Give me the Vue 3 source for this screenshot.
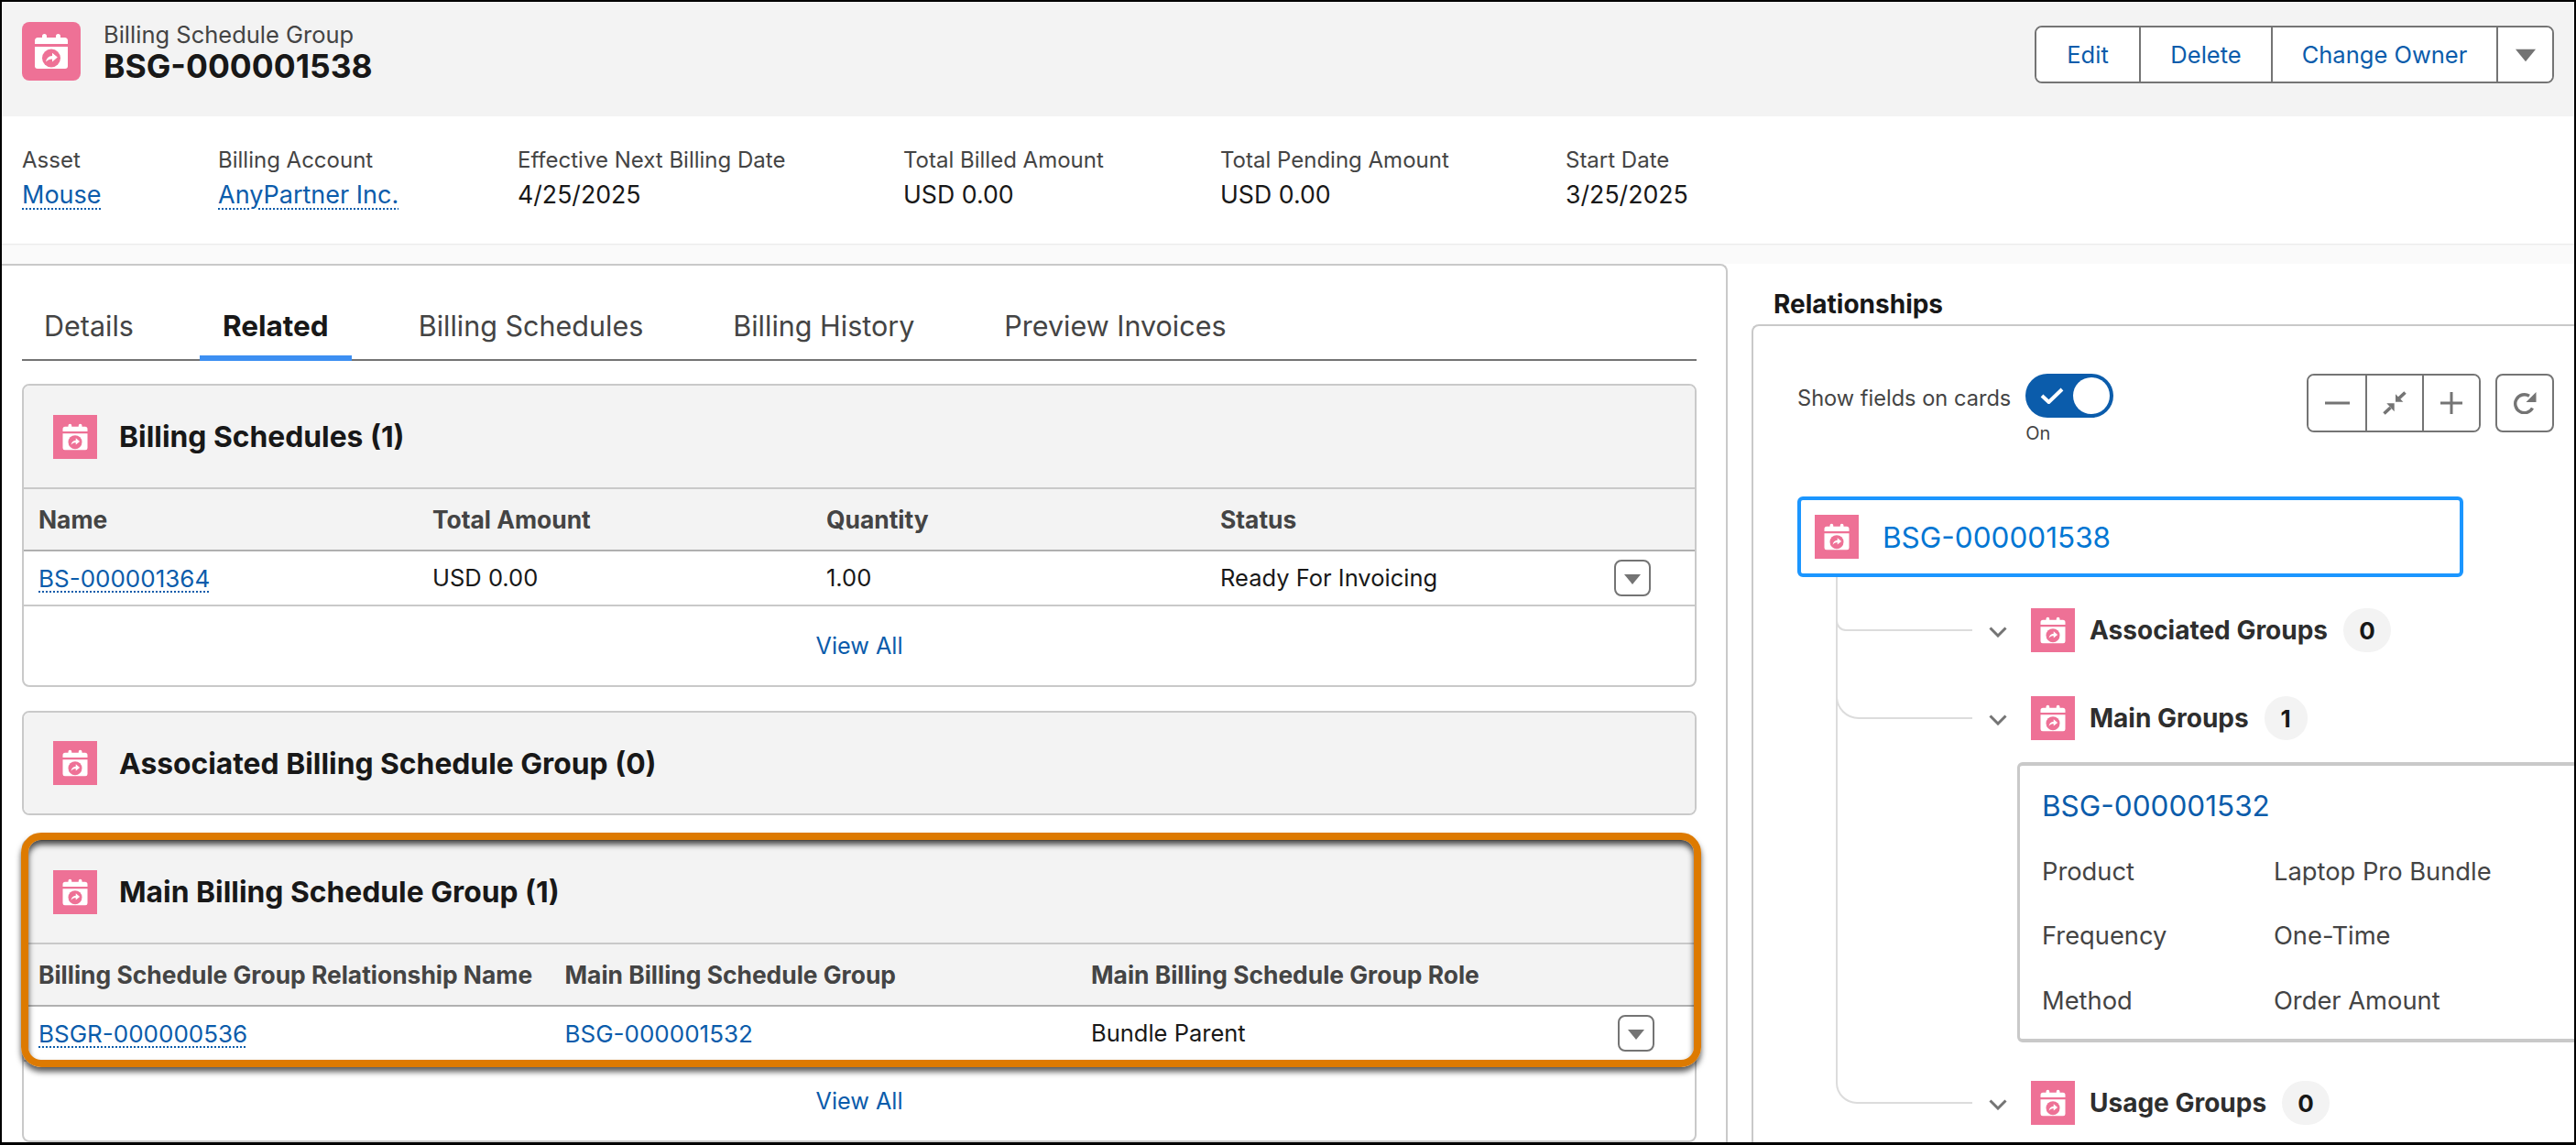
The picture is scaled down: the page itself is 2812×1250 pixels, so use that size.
<script setup>
const highlights = [
  { label: "Asset", value: "Mouse", link: true },
  { label: "Billing Account", value: "AnyPartner Inc.", link: true },
  { label: "Effective Next Billing Date", value: "4/25/2025" },
  { label: "Total Billed Amount", value: "USD 0.00" },
  { label: "Total Pending Amount", value: "USD 0.00" },
  { label: "Start Date", value: "3/25/2025" },
];

const tabs = ["Details", "Related", "Billing Schedules", "Billing History", "Preview Invoices"];

const fields = [
  { label: "Product", value: "Laptop Pro Bundle" },
  { label: "Frequency", value: "One-Time" },
  { label: "Method", value: "Order Amount" },
];
</script>

<template>
  <div class="page">
    <svg class="defs" width="0" height="0">
      <symbol id="bsg" viewBox="0 0 64 64">
        <path fill="#fff" d="M14 20.500a3.500 3.500 0 0 1 3.500-3.500H22v-1.500a2.500 2.500 0 0 1 5 0V17h10v-1.500a2.500 2.500 0 0 1 5 0V17h4.500a3.500 3.500 0 0 1 3.500 3.500V24H14z" />
        <path fill="#fff" d="M14 27h36v21a3 3 0 0 1-3 3H17a3 3 0 0 1-3-3z" />
        <circle cx="32" cy="39.500" r="10" fill="#ee7196" />
        <path fill="#fff" d="M33 33.800l5.800 4.800-5.800 4.800v-3c-3 0-5 .8-6.800 3.200.3-3.800 2.800-6.500 6.800-6.700z" />
      </symbol>
      <symbol id="caret" viewBox="0 0 18 11">
        <path fill="#747474" d="M0 0h18l-9 11z" />
      </symbol>
    </svg>

    <header class="page-header">
      <div class="title-block">
        <svg class="icon-large"><use href="#bsg" /></svg>
        <div>
          <div class="object-name">Billing Schedule Group</div>
          <h1>BSG-000001538</h1>
        </div>
      </div>
      <div class="actions">
        <button type="button" class="edit">Edit</button>
        <button type="button" class="delete">Delete</button>
        <button type="button" class="owner">Change Owner</button>
        <button type="button" class="more"><svg class="caret-big"><use href="#caret" /></svg></button>
      </div>
    </header>

    <section class="highlights">
      <div v-for="item in highlights" :key="item.label" class="highlight">
        <div class="highlight-label">{{ item.label }}</div>
        <div class="highlight-value">
          <a v-if="item.link" class="link dotted">{{ item.value }}</a>
          <template v-else>{{ item.value }}</template>
        </div>
      </div>
    </section>

    <div class="band"></div>

    <div class="content">
      <main class="left-panel">
        <nav class="tabs">
          <div
            v-for="tab in tabs"
            :key="tab"
            class="tab"
            :class="{ active: tab === 'Related' }"
          >
            {{ tab }}
          </div>
        </nav>

        <section class="card first">
          <div class="card-header">
            <svg class="icon"><use href="#bsg" /></svg>
            <h2>Billing Schedules (1)</h2>
          </div>
          <div class="table-head cols-four">
            <span>Name</span>
            <span>Total Amount</span>
            <span>Quantity</span>
            <span>Status</span>
          </div>
          <div class="table-row cols-four">
            <a class="link dotted">BS-000001364</a>
            <span>USD 0.00</span>
            <span>1.00</span>
            <span>Ready For Invoicing</span>
            <button type="button" class="row-menu"><svg class="caret-small"><use href="#caret" /></svg></button>
          </div>
          <div class="view-all"><a class="link">View All</a></div>
        </section>

        <section class="card second">
          <div class="card-header only">
            <svg class="icon"><use href="#bsg" /></svg>
            <h2>Associated Billing Schedule Group (0)</h2>
          </div>
        </section>

        <section class="card third">
          <div class="callout">
            <div class="card-header">
              <svg class="icon"><use href="#bsg" /></svg>
              <h2>Main Billing Schedule Group (1)</h2>
            </div>
            <div class="table-head cols-three">
              <span>Billing Schedule Group Relationship Name</span>
              <span>Main Billing Schedule Group</span>
              <span>Main Billing Schedule Group Role</span>
            </div>
            <div class="table-row cols-three">
              <a class="link dotted">BSGR-000000536</a>
              <a class="link">BSG-000001532</a>
              <span>Bundle Parent</span>
              <button type="button" class="row-menu"><svg class="caret-small"><use href="#caret" /></svg></button>
            </div>
          </div>
          <div class="view-all"><a class="link">View All</a></div>
        </section>
      </main>

      <aside class="right-panel">
        <h3 class="rel-title">Relationships</h3>
        <div class="rel-card">
          <div class="toolbar">
            <div class="show-fields">
              <span class="show-label">Show fields on cards</span>
              <div>
                <div class="toggle">
                  <svg class="check" viewBox="0 0 26 18"><path d="M2 9l7.500 7L24 2" /></svg>
                  <span class="knob"></span>
                </div>
                <div class="toggle-state">On</div>
              </div>
            </div>
            <div class="zoom-tools">
              <div class="tool-group">
                <button type="button" class="tool">
                  <svg width="27" height="4"><path d="M0 2h27" stroke="#747474" stroke-width="3" /></svg>
                </button>
                <button type="button" class="tool">
                  <svg width="26" height="26" viewBox="0 0 26 26" fill="#747474">
                    <path d="M14 3.300v8.400h8.400z" />
                    <path d="M12.700 13.300H4.300l8.400 9z" />
                    <path d="M17.500 8L24.500 1.500M8.500 18L1.500 24.500" stroke="#747474" stroke-width="3.600" />
                  </svg>
                </button>
                <button type="button" class="tool">
                  <svg width="24" height="24"><path d="M0 12h24M12 0v24" stroke="#747474" stroke-width="3" /></svg>
                </button>
              </div>
              <button type="button" class="tool single">
                <svg width="25" height="24" viewBox="0 0 25 24" fill="none">
                  <path d="M20.500 17.500A10 10 0 1 1 17 4.200" stroke="#747474" stroke-width="3.400" />
                  <path d="M24.500 0v11h-11z" fill="#747474" />
                </svg>
              </button>
            </div>
          </div>

          <div class="tree">
            <svg class="connectors" width="200" height="680" fill="none" stroke="#dcdcdc" stroke-width="2">
              <path d="M43 136a10 10 0 0 0 10 10H191" />
              <path d="M43 218a24 24 0 0 0 24 24H191" />
              <path d="M43 88V640a22 22 0 0 0 22 22H191" />
            </svg>

            <div class="root-node">
              <svg class="icon"><use href="#bsg" /></svg>
              <span>BSG-000001538</span>
            </div>

            <div class="group-row associated">
              <svg class="chevron" viewBox="0 0 20 12"><path d="M1.500 1.500L10 10l8.500-8.500" /></svg>
              <svg class="icon"><use href="#bsg" /></svg>
              <strong>Associated Groups</strong>
              <span class="count">0</span>
            </div>

            <div class="group-row main">
              <svg class="chevron" viewBox="0 0 20 12"><path d="M1.500 1.500L10 10l8.500-8.500" /></svg>
              <svg class="icon"><use href="#bsg" /></svg>
              <strong>Main Groups</strong>
              <span class="count narrow">1</span>
            </div>

            <div class="record-card">
              <a class="link record-name">BSG-000001532</a>
              <div v-for="field in fields" :key="field.label" class="record-field">
                <span>{{ field.label }}</span>
                <span>{{ field.value }}</span>
              </div>
            </div>

            <div class="group-row usage">
              <svg class="chevron" viewBox="0 0 20 12"><path d="M1.500 1.500L10 10l8.500-8.500" /></svg>
              <svg class="icon"><use href="#bsg" /></svg>
              <strong>Usage Groups</strong>
              <span class="count">0</span>
            </div>
          </div>
        </div>
      </aside>
    </div>
  </div>
</template>

<style scoped>
.page {
  box-sizing: border-box;
  width: 2812px;
  height: 1250px;
  display: flex;
  flex-direction: column;
  overflow: hidden;
  background: #fff;
  border: 2px solid #000;
  border-bottom-width: 3px;
  font-family: Inter, "Liberation Sans", sans-serif;
  color: #181818;
}

.defs {
  position: absolute;
}

h1,
h2,
h3 {
  margin: 0;
}

button {
  font: inherit;
  background: #fff;
  padding: 0;
  cursor: pointer;
}

.link {
  color: #0b5cab;
}

.link.dotted {
  text-decoration: underline dotted 2px;
  text-underline-offset: 5px;
}

.page-header {
  flex: none;
  height: 125px;
  box-sizing: border-box;
  display: flex;
  justify-content: space-between;
  padding: 21px 22px 0;
  background: #f3f3f3;
}

.title-block {
  display: flex;
  gap: 25px;
}

.icon-large {
  width: 64px;
  height: 64px;
  margin-top: 1px;
  border-radius: 8px;
  background: #ee7196;
}

.object-name {
  font-size: 25.500px;
  line-height: 30px;
  color: #444;
}

h1 {
  font-size: 35.500px;
  font-weight: 700;
  line-height: 40px;
}

.actions {
  display: flex;
  height: 63px;
  margin-top: 5px;
  box-sizing: border-box;
  border: 2px solid #747474;
  border-radius: 8px;
  overflow: hidden;
  background: #fff;
}

.actions button {
  border: 0;
  border-left: 2px solid #747474;
  color: #0b5cab;
  font-size: 25.500px;
}

.actions .edit {
  width: 112px;
  border-left: 0;
}

.actions .delete {
  width: 144px;
}

.actions .owner {
  width: 246px;
}

.actions .more {
  width: 61px;
}

.caret-big {
  display: block;
  width: 22px;
  height: 17px;
  margin: 2px auto 0;
}

.highlights {
  flex: none;
  height: 139px;
  box-sizing: border-box;
  display: grid;
  grid-template-columns: 214px 327px 421px 346px 377px auto;
  padding: 33px 0 0 22px;
}

.highlight-label {
  font-size: 24px;
  line-height: 30px;
  color: #444;
}

.highlight-value {
  margin-top: 4px;
  font-size: 26.700px;
  line-height: 36px;
}

.highlight-value .link {
  font-size: 27px;
}

.band {
  flex: none;
  height: 22px;
  background: #fafafa;
  box-shadow: inset 0 2px 2px -1px rgba(0, 0, 0, 0.08);
}

.content {
  flex: 1;
  min-height: 0;
  display: flex;
}

.left-panel {
  box-sizing: border-box;
  width: 1884px;
  flex: none;
  padding: 0 32px 0 22px;
  border-top: 2px solid #c9c9c9;
  border-right: 2px solid #c9c9c9;
  border-top-right-radius: 8px;
}

.tabs {
  display: flex;
  align-items: flex-end;
  gap: 48px;
  height: 102px;
  border-bottom: 2px solid #747474;
}

.tab {
  display: flex;
  align-items: center;
  height: 78px;
  margin-bottom: -2px;
  padding: 0 25px;
  font-size: 30.500px;
  color: #444;
}

.tab:first-child {
  padding-left: 24px;
  padding-right: 24px;
}

.tab.active {
  font-size: 31.500px;
  font-weight: 700;
  color: #181818;
  box-shadow: inset 0 -6px 0 #3d8ff2;
}

.card {
  border: 2px solid #c9c9c9;
  border-radius: 8px;
  overflow: visible;
}

.first {
  margin-top: 25px;
}

.second,
.third {
  margin-top: 26px;
}

.card-header {
  display: flex;
  align-items: center;
  gap: 24px;
  height: 111px;
  box-sizing: border-box;
  padding-left: 32px;
  background: #f3f3f3;
  border-radius: 6px 6px 0 0;
}

.card-header.only {
  height: 110px;
  border-radius: 6px;
}

.icon {
  flex: none;
  width: 48px;
  height: 48px;
  background: #ee7196;
}

h2 {
  font-size: 31.800px;
  font-weight: 700;
}

.table-head,
.table-row {
  display: grid;
  align-items: center;
  padding-left: 16px;
}

.cols-four {
  grid-template-columns: repeat(4, 430px) 1fr;
}

.cols-three {
  grid-template-columns: repeat(3, 574.500px) 1fr;
}

.table-head {
  height: 70px;
  box-sizing: border-box;
  border-top: 2px solid #c9c9c9;
  border-bottom: 2px solid #b0b0b0;
  background: #f3f3f3;
  font-size: 26.400px;
  font-weight: 700;
  color: #444;
}

.table-row {
  height: 60px;
  box-sizing: border-box;
  border-bottom: 2px solid #c9c9c9;
  padding-right: 48px;
  padding-bottom: 2px;
  font-size: 25.500px;
}

.table-row .link {
  font-size: 26px;
  line-height: 30px;
  padding-top: 3px;
}

.third .table-row {
  padding-right: 46px;
}

.row-menu {
  justify-self: end;
  width: 40px;
  height: 40px;
  margin-top: 2px;
  box-sizing: border-box;
  border: 2px solid #747474;
  border-radius: 8px;
}

.caret-small {
  display: block;
  width: 18px;
  height: 11px;
  margin: 2px auto 0;
}

.view-all {
  height: 86px;
  display: flex;
  align-items: center;
  justify-content: center;
  font-size: 25.200px;
}

.callout {
  position: relative;
}

/* annotation drawn over the screenshot */
.callout::after {
  content: "";
  position: absolute;
  inset: -9px -7px -6px -3px;
  border: 8px solid #dd7a01;
  border-radius: 22px;
  box-shadow: 0 5px 6px rgba(0, 0, 0, 0.65), inset 0 5px 6px rgba(0, 0, 0, 0.7);
  pointer-events: none;
}

.right-panel {
  flex: 1;
  min-width: 0;
  padding-left: 26px;
}

.rel-title {
  height: 66px;
  box-sizing: border-box;
  padding: 28px 0 0 24px;
  font-size: 28px;
  line-height: 32px;
  font-weight: 700;
}

.rel-card {
  height: 900px;
  box-sizing: border-box;
  width: 960px;
  border-top: 2px solid #c9c9c9;
  border-left: 2px solid #c9c9c9;
  border-top-left-radius: 8px;
}

.toolbar {
  display: flex;
  justify-content: space-between;
  width: 896px;
  box-sizing: border-box;
  padding: 52px 22px 0 48px;
}

.show-fields {
  display: flex;
  gap: 16px;
}

.show-label {
  margin-top: 12px;
  font-size: 23.600px;
  line-height: 30px;
  color: #444;
}

.toggle {
  display: flex;
  align-items: center;
  justify-content: space-between;
  box-sizing: border-box;
  width: 96px;
  height: 48px;
  padding: 0 4px 0 16px;
  border-radius: 24px;
  background: #0b5cab;
}

.check {
  width: 26px;
  height: 18px;
  fill: none;
  stroke: #fff;
  stroke-width: 4;
}

.knob {
  width: 40px;
  height: 40px;
  border-radius: 50%;
  background: #fff;
}

.toggle-state {
  margin-top: 5px;
  font-size: 20px;
  line-height: 24px;
  color: #444;
}

.zoom-tools {
  display: flex;
  gap: 16px;
}

.tool-group {
  display: flex;
  box-sizing: border-box;
  height: 64px;
  border: 2px solid #747474;
  border-radius: 8px;
  overflow: hidden;
}

.tool {
  display: flex;
  align-items: center;
  justify-content: center;
  width: 62px;
  border: 0;
  border-left: 2px solid #747474;
}

.tool:first-child {
  border-left: 0;
}

.tool.single {
  width: 64px;
  height: 64px;
  box-sizing: border-box;
  border: 2px solid #747474;
  border-radius: 8px;
}

.tree {
  position: relative;
  margin: 57px 0 0 48px;
  width: 848px;
}

.connectors {
  position: absolute;
  top: 0;
  left: 0;
}

.root-node {
  display: flex;
  align-items: center;
  gap: 26px;
  width: 727px;
  height: 88px;
  box-sizing: border-box;
  padding-left: 15px;
  border: 4px solid #1b96ff;
  border-radius: 6px;
  font-size: 31.500px;
  color: #0176d3;
}

.group-row {
  position: relative;
  display: flex;
  align-items: center;
  height: 48px;
  padding-left: 209px;
}

.associated {
  margin-top: 34px;
}

.main {
  margin-top: 48px;
}

.usage {
  margin-top: 42px;
}

.chevron {
  flex: none;
  width: 20px;
  height: 12px;
  margin: 4px 26px 0 0;
  fill: none;
  stroke: #747474;
  stroke-width: 3;
}

.group-row strong {
  margin-left: 16px;
  font-size: 28px;
  font-weight: 700;
  color: #2e2e2e;
}

.count {
  display: flex;
  align-items: center;
  justify-content: center;
  width: 52px;
  height: 48px;
  margin-left: 17px;
  border-radius: 24px;
  background: #f3f3f3;
  font-size: 26px;
  font-weight: 700;
}

.count.narrow {
  width: 47px;
}

.record-card {
  box-sizing: border-box;
  width: 700px;
  height: 306px;
  margin: 24px 0 0 240px;
  padding: 24px 0 0 24px;
  border: 4px solid #c9c9c9;
  border-left-width: 3px;
  border-radius: 6px;
}

.record-name {
  display: block;
  font-size: 31.500px;
  line-height: 40px;
}

.record-field {
  display: grid;
  grid-template-columns: 253px 1fr;
  height: 70.500px;
  align-items: center;
  font-size: 27.300px;
  color: #444;
}

.record-field:first-of-type {
  margin-top: 16px;
}
</style>
